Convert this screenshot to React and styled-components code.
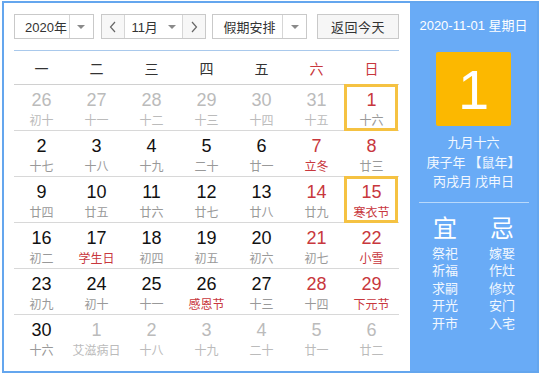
import React from "react";
import styled, { createGlobalStyle } from "styled-components";

const Global = createGlobalStyle`
  html, body { margin: 0; padding: 0; background: #fff; }
  body { font-family: "Liberation Sans", "Noto Sans CJK SC", sans-serif; }
  * { box-sizing: border-box; }
`;

const Frame = styled.div`
  margin: 1px 0 0 2px;
  width: 537px;
  height: 372px;
  border: 2px solid #64a6ee;
  display: flex;
  background: #fff;
`;

const Main = styled.div`
  width: 406px;
  padding: 11px 11px 0 10px;
  display: flex;
  flex-direction: column;
`;

const Toolbar = styled.div`
  display: flex;
  height: 25px;
  font-size: 13px;
  color: #333;
`;

const Box = styled.div`
  display: flex;
  height: 25px;
  border: 1px solid #c9c9c9;
  background: #fff;
  margin-left: ${(p) => p.$ml || 0}px;
  width: ${(p) => p.$w}px;
`;

const Label = styled.div`
  flex: 1;
  display: flex;
  align-items: center;
  padding-left: ${(p) => p.$pl ?? 10}px;
  justify-content: ${(p) => (p.$center ? "center" : "flex-start")};
  white-space: nowrap;
`;

const CaretCell = styled.div`
  width: 24px;
  border-left: 1px solid #d6d6d6;
  display: flex;
  align-items: center;
  justify-content: center;
  &::after {
    content: "";
    border-left: 4px solid transparent;
    border-right: 4px solid transparent;
    border-top: 4px solid #8a8a8a;
  }
`;

const InlineCaret = styled.span`
  margin-left: 10px;
  border-left: 4px solid transparent;
  border-right: 4px solid transparent;
  border-top: 4px solid #8a8a8a;
`;

const ArrowCell = styled.div`
  width: 23px;
  display: flex;
  align-items: center;
  justify-content: center;
  background: #f7f7f7;
  border-left: ${(p) => (p.$right ? "1px solid #d6d6d6" : "none")};
  border-right: ${(p) => (p.$right ? "none" : "1px solid #d6d6d6")};
`;

const TodayBtn = styled.div`
  margin-left: 10px;
  width: 82px;
  height: 25px;
  border: 1px solid #c9c9c9;
  background: #f6f6f6;
  display: flex;
  align-items: center;
  justify-content: center;
  letter-spacing: 0.5px;
`;

const Sep = styled.div`
  margin-top: 11px;
  height: 1px;
  background: #a9c9ec;
`;

const Grid = styled.div`
  display: grid;
  grid-template-columns: repeat(7, 55px);
`;

const Head = styled.div`
  height: 34px;
  display: flex;
  align-items: center;
  justify-content: center;
  font-size: 14px;
  color: ${(p) => (p.$red ? "#c8373d" : "#333")};
  border-bottom: 1px solid #d0d0d0;
  font-family: "Noto Sans CJK SC", sans-serif;
`;

const Cell = styled.div`
  position: relative;
  height: 46px;
  display: flex;
  flex-direction: column;
  align-items: center;
  padding-top: 5px;
  border-bottom: ${(p) => (p.$last ? "none" : "1px solid #d8d8d8")};
  &::after {
    content: "";
    display: ${(p) => (p.$sel ? "block" : "none")};
    position: absolute;
    left: 0;
    right: 1px;
    top: -1px;
    bottom: -1px;
    border: 3px solid #f5c242;
  }
`;

const Num = styled.div`
  font-size: 18px;
  line-height: 21px;
  color: ${(p) => p.$c};
`;

const Lunar = styled.div`
  font-size: 12px;
  line-height: 16px;
  margin-top: 1px;
  color: ${(p) => p.$c};
  font-family: "Noto Sans CJK SC", sans-serif;
  white-space: nowrap;
`;

const Side = styled.div`
  flex: 1;
  background: #69abf6;
  color: #fff;
  display: flex;
  flex-direction: column;
  align-items: center;
  padding-top: 14px;
`;

const DateLine = styled.div`
  font-size: 13px;
  line-height: 18px;
`;

const BigDay = styled.div`
  margin-top: 17px;
  width: 75px;
  height: 74px;
  background: #fcb800;
  border-radius: 2px;
  display: flex;
  align-items: center;
  justify-content: center;
  font-size: 56px;
  color: #fff;
`;

const InfoLine = styled.div`
  font-size: 13px;
  line-height: 19.5px;
  font-family: "Noto Sans CJK SC", sans-serif;
  color: #f2f8ff;
  white-space: nowrap;
  margin-top: ${(p) => p.$mt || 0}px;
`;

const Rule = styled.div`
  width: 110px;
  height: 1px;
  background: #b9d9fb;
  margin-top: 11px;
`;

const Cols = styled.div`
  margin-top: 9px;
  display: flex;
  gap: 31px;
`;

const Col = styled.div`
  display: flex;
  flex-direction: column;
  align-items: center;
  font-family: "Noto Sans CJK SC", sans-serif;
`;

const ColHead = styled.div`
  font-size: 24px;
  line-height: 30px;
  margin-bottom: 2px;
`;

const ColItem = styled.div`
  font-size: 13px;
  line-height: 17.5px;
  color: #f2f8ff;
`;

const Chevron = ({ right }) => (
  <svg width="8" height="12" viewBox="0 0 8 12">
    <path
      d={right ? "M2 1 L6.5 6 L2 11" : "M6 1 L1.5 6 L6 11"}
      fill="none"
      stroke="#666"
      strokeWidth="1.2"
    />
  </svg>
);

const RED = "#c8373d";
const BLACK = "#111";
const GRAY = "#bbb";
const LGRAY = "#999";

const rows = [
  [["26", "初十", "o"], ["27", "十一", "o"], ["28", "十二", "o"], ["29", "十三", "o"], ["30", "十四", "o"], ["31", "十五", "o"], ["1", "十六", "w", 0, 1]],
  [["2", "十七"], ["3", "十八"], ["4", "十九"], ["5", "二十"], ["6", "廿一"], ["7", "立冬", "w", 1], ["8", "廿三", "w"]],
  [["9", "廿四"], ["10", "廿五"], ["11", "廿六"], ["12", "廿七"], ["13", "廿八"], ["14", "廿九", "w"], ["15", "寒衣节", "w", 1, 1]],
  [["16", "初二"], ["17", "学生日", "c", 1], ["18", "初四"], ["19", "初五"], ["20", "初六"], ["21", "初七", "w"], ["22", "小雪", "w", 1]],
  [["23", "初九"], ["24", "初十"], ["25", "十一"], ["26", "感恩节", "c", 1], ["27", "十三"], ["28", "十四", "w"], ["29", "下元节", "w", 1]],
  [["30", "十六"], ["1", "艾滋病日", "o"], ["2", "十八", "o"], ["3", "十九", "o"], ["4", "二十", "o"], ["5", "廿一", "o"], ["6", "廿二", "o"]],
];

const heads = ["一", "二", "三", "四", "五", "六", "日"];
const yi = ["祭祀", "祈福", "求嗣", "开光", "开市"];
const ji = ["嫁娶", "作灶", "修坟", "安门", "入宅"];

export default function App() {
  return (
    <>
      <Global />
      <Frame>
        <Main>
          <Toolbar>
            <Box $w={80}>
              <Label>2020年</Label>
              <CaretCell />
            </Box>
            <Box $w={106} $ml={7}>
              <ArrowCell>
                <Chevron />
              </ArrowCell>
              <Label $center $pl={0}>
                11月<InlineCaret />
              </Label>
              <ArrowCell $right>
                <Chevron right />
              </ArrowCell>
            </Box>
            <Box $w={95} $ml={6}>
              <Label>假期安排</Label>
              <CaretCell />
            </Box>
            <TodayBtn>返回今天</TodayBtn>
          </Toolbar>
          <Sep />
          <Grid>
            {heads.map((h, i) => (
              <Head key={h} $red={i >= 5}>
                {h}
              </Head>
            ))}
            {rows.map((r, ri) =>
              r.map(([n, l, k, fest, sel], ci) => {
                const other = k === "o";
                const numC = other ? GRAY : k === "w" ? RED : BLACK;
                const lunC = other ? GRAY : fest ? RED : LGRAY;
                return (
                  <Cell key={ri + "-" + ci} $last={ri === 5} $sel={!!sel}>
                    <Num $c={numC}>{n}</Num>
                    <Lunar $c={lunC}>{l}</Lunar>
                  </Cell>
                );
              })
            )}
          </Grid>
        </Main>
        <Side>
          <DateLine>2020-11-01 星期日</DateLine>
          <BigDay>1</BigDay>
          <InfoLine $mt={6}>九月十六</InfoLine>
          <InfoLine>庚子年 【鼠年】</InfoLine>
          <InfoLine>丙戌月 戊申日</InfoLine>
          <Rule />
          <Cols>
            <Col>
              <ColHead>宜</ColHead>
              {yi.map((t) => (
                <ColItem key={t}>{t}</ColItem>
              ))}
            </Col>
            <Col>
              <ColHead>忌</ColHead>
              {ji.map((t) => (
                <ColItem key={t}>{t}</ColItem>
              ))}
            </Col>
          </Cols>
        </Side>
      </Frame>
    </>
  );
}
